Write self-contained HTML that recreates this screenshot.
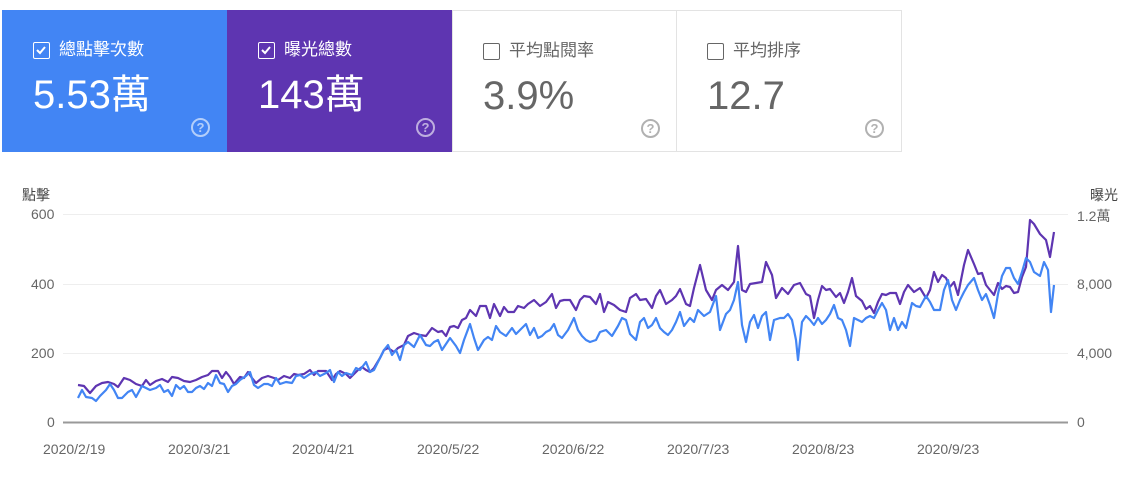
<!DOCTYPE html>
<html><head><meta charset="utf-8"><style>
body{margin:0;width:1145px;height:500px;background:#fff;font-family:"Liberation Sans","Noto Sans CJK TC",sans-serif;overflow:hidden;position:relative}
.card{position:absolute;top:10px;height:142px;width:225px;box-sizing:border-box}
.c1{left:2px;background:#4285f4;color:#fff}
.c2{left:227px;background:#5e35b1;color:#fff}
.c3{left:452px;border:1px solid #e3e3e3;color:#666}
.c4{left:677px;width:225px;border:1px solid #e3e3e3;border-left:none;color:#666}
.lab{position:absolute;left:31px;top:30px;font-size:17px;line-height:20px;display:flex;align-items:center}
.cb{width:17px;height:17px;border:1.5px solid currentColor;border-radius:2px;margin-right:9px;box-sizing:border-box;position:relative}
.val{position:absolute;left:31px;top:62px;font-size:40px;line-height:46px}
.q{position:absolute;left:189px;top:108px;width:19px;height:19px;border-radius:50%;border:2px solid currentColor;box-sizing:border-box;font-size:13px;font-weight:bold;text-align:center;line-height:15px;opacity:.6}
.ax{position:absolute;font-size:14px;color:#666}
</style></head><body>
<div class="card c1"><div class="lab"><div class="cb"><svg width="14" height="14" style="position:absolute;left:0;top:0"><path d="M3 7l3 3l5-6" stroke="#fff" stroke-width="2" fill="none"/></svg></div>總點擊次數</div><div class="val">5.53萬</div><div class="q">?</div></div>
<div class="card c2"><div class="lab"><div class="cb"><svg width="14" height="14" style="position:absolute;left:0;top:0"><path d="M3 7l3 3l5-6" stroke="#fff" stroke-width="2" fill="none"/></svg></div>曝光總數</div><div class="val">143萬</div><div class="q">?</div></div>
<div class="card c3"><div class="lab" style="left:30px"><div class="cb" style="border-width:1px"></div>平均點閱率</div><div class="val" style="left:30px">3.9%</div><div class="q" style="left:188px;opacity:.5">?</div></div>
<div class="card c4"><div class="lab" style="left:30px"><div class="cb" style="border-width:1px"></div>平均排序</div><div class="val" style="left:30px">12.7</div><div class="q" style="left:188px;opacity:.5">?</div></div>

<div class="ax" style="left:22px;top:185px;color:#444">點擊</div>
<div class="ax" style="left:1090px;top:185px;color:#444">曝光</div>
<div class="ax" style="left:31px;top:206px">600</div>
<div class="ax" style="left:31px;top:276px">400</div>
<div class="ax" style="left:31px;top:345px">200</div>
<div class="ax" style="left:47px;top:414px">0</div>
<div class="ax" style="left:1077px;top:206px">1.2萬</div>
<div class="ax" style="left:1077px;top:276px">8,000</div>
<div class="ax" style="left:1077px;top:345px">4,000</div>
<div class="ax" style="left:1077px;top:414px">0</div>
<div class="ax" style="left:43px;top:441px">2020/2/19</div>
<div class="ax" style="left:168px;top:441px">2020/3/21</div>
<div class="ax" style="left:292px;top:441px">2020/4/21</div>
<div class="ax" style="left:417px;top:441px">2020/5/22</div>
<div class="ax" style="left:542px;top:441px">2020/6/22</div>
<div class="ax" style="left:667px;top:441px">2020/7/23</div>
<div class="ax" style="left:792px;top:441px">2020/8/23</div>
<div class="ax" style="left:917px;top:441px">2020/9/23</div>

<svg width="1145" height="500" style="position:absolute;left:0;top:0">
<g stroke="#eee" stroke-width="1"><line x1="63" y1="214.5" x2="1068" y2="214.5"/><line x1="63" y1="284.5" x2="1068" y2="284.5"/><line x1="63" y1="353.5" x2="1068" y2="353.5"/></g>
<line x1="63" y1="422.5" x2="1068" y2="422.5" stroke="#999" stroke-width="2"/>
<polyline fill="none" stroke="#5e35b1" stroke-width="2.2" stroke-linejoin="round" points="78,385 84,386 90,393 96,386 102,383 108,382 114,384 118,387 124,378 130,380 136,384 142,386 146,380 150,385 156,381 162,379 168,382 172,377 178,378 184,381 190,382 196,380 202,377 208,375 212,371 218,371 222,378 226,372 230,377 234,384 240,377 244,378 248,372 252,378 256,383 262,378 268,376 274,378 278,380 284,376 290,378 294,374 298,375 304,374 310,370 314,375 318,371 322,371 326,371 332,380 336,374 340,371 346,374 350,378 354,374 358,370 362,367 366,370 370,372 374,368 380,358 384,350 388,348 394,352 398,348 404,345 408,336 414,333 420,335 426,336 432,328 438,332 442,331 446,336 450,327 454,326 458,328 462,320 466,318 470,310 476,316 480,306 486,306 490,318 494,304 500,316 504,307 508,312 514,312 518,306 524,308 528,304 534,300 540,306 546,302 552,294 556,308 560,301 564,300 570,300 576,310 580,300 584,296 590,297 596,304 600,294 604,312 608,302 614,305 620,310 626,312 630,298 636,294 640,300 646,299 652,308 656,296 660,290 666,304 672,300 676,296 680,289 686,304 690,306 694,288 700,265 706,290 712,300 716,290 722,285 728,290 734,282 738,246 742,290 746,292 750,284 756,283 762,282 766,262 772,275 776,298 782,288 788,294 794,285 800,283 806,294 810,296 814,318 818,300 822,286 826,290 830,289 836,297 840,293 844,303 848,292 852,278 856,296 862,301 866,309 870,306 874,313 878,302 882,294 886,295 890,293 896,293 900,304 904,292 908,285 914,292 920,288 926,298 930,290 934,272 938,282 942,275 946,278 950,287 954,282 958,295 964,265 968,250 974,264 978,274 982,273 986,285 990,290 994,295 998,283 1002,289 1006,286 1010,287 1014,293 1018,292 1022,277 1026,267 1030,220 1034,224 1040,234 1046,240 1050,257 1054,232"/>
<polyline fill="none" stroke="#4285f4" stroke-width="2.2" stroke-linejoin="round" points="78,398 82,390 86,397 92,398 96,401 100,396 106,390 110,384 114,390 118,398 122,398 128,392 132,390 136,397 142,386 146,388 150,390 156,388 160,385 164,392 168,390 172,396 176,385 180,389 184,386 188,392 192,392 196,388 200,386 204,389 208,383 212,386 216,375 220,383 224,384 228,392 232,386 236,384 240,380 246,376 250,372 254,385 258,388 264,384 268,384 272,386 276,378 280,384 286,382 292,383 296,376 300,375 304,378 310,374 316,372 320,376 326,373 330,370 334,382 338,372 342,376 346,373 352,375 356,368 360,370 366,362 370,372 374,370 380,358 384,350 388,345 392,355 396,350 400,360 404,345 408,342 414,347 420,335 426,345 430,346 434,342 438,340 442,350 446,344 450,338 456,346 460,353 464,340 470,324 474,338 478,350 484,340 488,337 492,340 496,326 500,332 506,336 512,328 516,334 520,330 526,324 530,335 534,328 538,338 542,336 546,332 550,330 554,324 558,335 562,338 568,330 574,318 578,330 582,336 586,340 590,342 596,340 600,332 606,330 612,336 618,326 622,318 626,320 630,334 636,340 640,322 644,318 648,328 652,325 656,318 660,328 664,332 668,335 672,330 676,322 680,312 684,326 690,318 694,322 698,310 704,316 710,312 716,296 720,330 726,314 730,310 734,300 738,282 742,325 746,342 750,322 754,315 758,328 762,316 766,312 770,340 774,320 780,318 784,318 788,314 792,320 796,340 798,360 802,322 806,316 810,320 814,325 818,318 822,324 826,320 830,314 834,305 838,318 842,320 846,330 850,346 854,318 858,320 862,322 866,318 870,316 874,318 878,310 882,303 886,310 890,330 894,318 898,330 902,322 906,328 912,303 916,306 920,307 926,296 930,302 934,310 940,310 944,290 948,280 952,300 956,310 960,300 964,292 968,285 974,278 978,290 982,300 986,294 990,305 994,318 998,294 1002,276 1006,268 1010,268 1014,278 1018,284 1022,272 1026,258 1030,262 1034,272 1040,276 1044,262 1048,270 1051,312 1054,285"/>
</svg>
</body></html>
